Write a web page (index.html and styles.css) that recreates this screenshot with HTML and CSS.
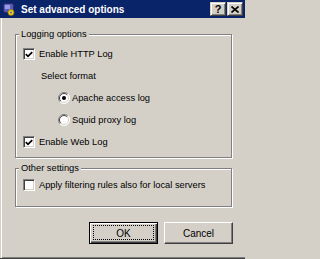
FILE: index.html
```html
<!DOCTYPE html>
<html>
<head>
<meta charset="utf-8">
<link rel="stylesheet" href="styles.css">
</head>
<body>
<div class="window">
  <div class="titlebar">
    <svg class="app-icon" width="12" height="13" viewBox="0 0 12 13">
      <rect x="0.5" y="0.5" width="10" height="9" rx="2" fill="#5a5ab8" stroke="#2a2a70"/>
      <rect x="2" y="2" width="5" height="4" fill="#9a9ae6"/>
      <circle cx="8" cy="9.5" r="3" fill="#f0d020" stroke="#8a7400" stroke-width="0.8"/>
      <circle cx="8" cy="9.5" r="1" fill="#5a5ab8"/>
    </svg>
    <span class="title">Set advanced options</span>
    <div class="caption-buttons">
      <div class="cap-btn"><span class="q">?</span></div>
      <div class="cap-btn">
        <svg width="8" height="7" viewBox="0 0 8 7"><path d="M0.5 0.5 L7.5 6.5 M7.5 0.5 L0.5 6.5" stroke="#000" stroke-width="1.6"/></svg>
      </div>
    </div>
  </div>
  <div class="body">
    <div class="group group-logging">
      <span class="legend">Logging options</span>
      <div class="row row-check">
        <span class="cb"><svg width="8" height="7" viewBox="0 0 8 7"><path d="M0.8 3.2 L3 5.4 L7.2 1.2" stroke="#000" stroke-width="1.7" fill="none"/></svg></span>
        <span class="label">Enable HTTP Log</span>
      </div>
      <div class="row row-sub"><span class="label">Select format</span></div>
      <div class="row row-radio">
        <svg class="rb" width="12" height="12" viewBox="0 0 12 12">
          <circle cx="6" cy="6" r="5.5" fill="#fff"/>
          <path d="M2.1 9.9 A5.5 5.5 0 0 1 9.9 2.1" stroke="#808080" fill="none"/>
          <path d="M9.9 2.1 A5.5 5.5 0 0 1 2.1 9.9" stroke="#fff" fill="none"/>
          <path d="M2.8 9.2 A4.5 4.5 0 0 1 9.2 2.8" stroke="#404040" fill="none"/>
          <path d="M9.2 2.8 A4.5 4.5 0 0 1 2.8 9.2" stroke="#d4d0c8" fill="none"/>
          <circle cx="6" cy="6" r="2" fill="#000"/>
        </svg>
        <span class="label">Apache access log</span>
      </div>
      <div class="row row-radio">
        <svg class="rb" width="12" height="12" viewBox="0 0 12 12">
          <circle cx="6" cy="6" r="5.5" fill="#fff"/>
          <path d="M2.1 9.9 A5.5 5.5 0 0 1 9.9 2.1" stroke="#808080" fill="none"/>
          <path d="M9.9 2.1 A5.5 5.5 0 0 1 2.1 9.9" stroke="#fff" fill="none"/>
          <path d="M2.8 9.2 A4.5 4.5 0 0 1 9.2 2.8" stroke="#404040" fill="none"/>
          <path d="M9.2 2.8 A4.5 4.5 0 0 1 2.8 9.2" stroke="#d4d0c8" fill="none"/>
        </svg>
        <span class="label">Squid proxy log</span>
      </div>
      <div class="row row-check">
        <span class="cb"><svg width="8" height="7" viewBox="0 0 8 7"><path d="M0.8 3.2 L3 5.4 L7.2 1.2" stroke="#000" stroke-width="1.7" fill="none"/></svg></span>
        <span class="label">Enable Web Log</span>
      </div>
    </div>
    <div class="group group-other">
      <span class="legend">Other settings</span>
      <div class="row row-check">
        <span class="cb"></span>
        <span class="label">Apply filtering rules also for local servers</span>
      </div>
    </div>
    <div class="buttons">
      <div class="btn btn-default"><span class="btn-text">OK</span></div>
      <div class="btn"><span class="btn-text">Cancel</span></div>
    </div>
  </div>
</div>
</body>
</html>
```
FILE: styles.css
```css
html, body {
  margin: 0;
  padding: 0;
  background: #d4d0c8;
}
body {
  font-family: "Liberation Sans", Arial, sans-serif;
  font-size: 9.3px;
  color: #000;
}
.window {
  width: 245px;
  height: 259px;
  box-sizing: border-box;
  display: flex;
  flex-direction: column;
  background: #d4d0c8;
  border-bottom: 1px solid #404040;
}
.titlebar {
  height: 18px;
  flex: none;
  background: #0a246a;
  display: flex;
  align-items: center;
  padding-left: 3px;
  padding-right: 2px;
}
.app-icon {
  flex: none;
}
.title {
  margin-left: 6px;
  color: #fff;
  font-weight: bold;
  font-size: 10px;
  white-space: nowrap;
  flex: 1;
}
.caption-buttons {
  display: flex;
  gap: 1px;
}
.cap-btn {
  width: 16px;
  height: 14px;
  box-sizing: border-box;
  background: #d4d0c8;
  border: 1px solid;
  border-color: #d4d0c8 #404040 #404040 #d4d0c8;
  box-shadow: inset 1px 1px 0 #fff, inset -1px -1px 0 #808080;
  display: flex;
  align-items: center;
  justify-content: center;
}
.q {
  font-weight: bold;
  font-size: 11px;
  line-height: 11px;
  margin-top: 1px;
}
.body {
  flex: 1;
  box-shadow: inset 1px 0 0 #d4d0c8, inset 2px 0 0 #fff, inset 0 -1px 0 #808080;
  padding-top: 16px;
}
.group {
  position: relative;
  margin-left: 15px;
  width: 217px;
  box-sizing: border-box;
  border: 1px solid #808080;
  box-shadow: inset 1px 1px 0 #fff, 1px 1px 0 #fff;
}
.group-logging {
  padding: 8px 0 4px;
}
.group-other {
  margin-top: 10px;
  padding: 5px 0 10px;
}
.legend {
  position: absolute;
  top: -7px;
  left: 3px;
  padding: 0 2px;
  line-height: 12px;
  background: #d4d0c8;
  white-space: nowrap;
}
.row {
  height: 22px;
  display: flex;
  align-items: center;
  white-space: nowrap;
}
.row-check {
  padding-left: 7px;
  gap: 4px;
}
.row-sub {
  padding-left: 25px;
}
.row-radio {
  padding-left: 42px;
  gap: 2px;
}
.cb {
  width: 12px;
  height: 12px;
  box-sizing: border-box;
  flex: none;
  background: #fff;
  border: 1px solid;
  border-color: #808080 #fff #fff #808080;
  box-shadow: inset 1px 1px 0 #404040, inset -1px -1px 0 #d4d0c8;
  display: flex;
  align-items: center;
  justify-content: center;
}
.rb {
  flex: none;
}
.buttons {
  display: flex;
  justify-content: flex-end;
  gap: 6px;
  margin-top: 15px;
  padding-right: 12px;
}
.btn {
  position: relative;
  width: 69px;
  height: 22px;
  box-sizing: border-box;
  background: #d4d0c8;
  border: 1px solid;
  border-color: #fff #404040 #404040 #fff;
  box-shadow: inset -1px -1px 0 #808080;
  display: flex;
  align-items: center;
  justify-content: center;
}
.btn-default {
  border-color: #000;
  box-shadow: inset 1px 1px 0 #fff, inset -1px -1px 0 #404040, inset -2px -2px 0 #808080;
}
.btn-default::after {
  content: "";
  position: absolute;
  left: 3px;
  top: 2px;
  right: 3px;
  bottom: 3px;
  border: 1px dotted #000;
}
.btn-text {
  font-size: 10px;
}
```
